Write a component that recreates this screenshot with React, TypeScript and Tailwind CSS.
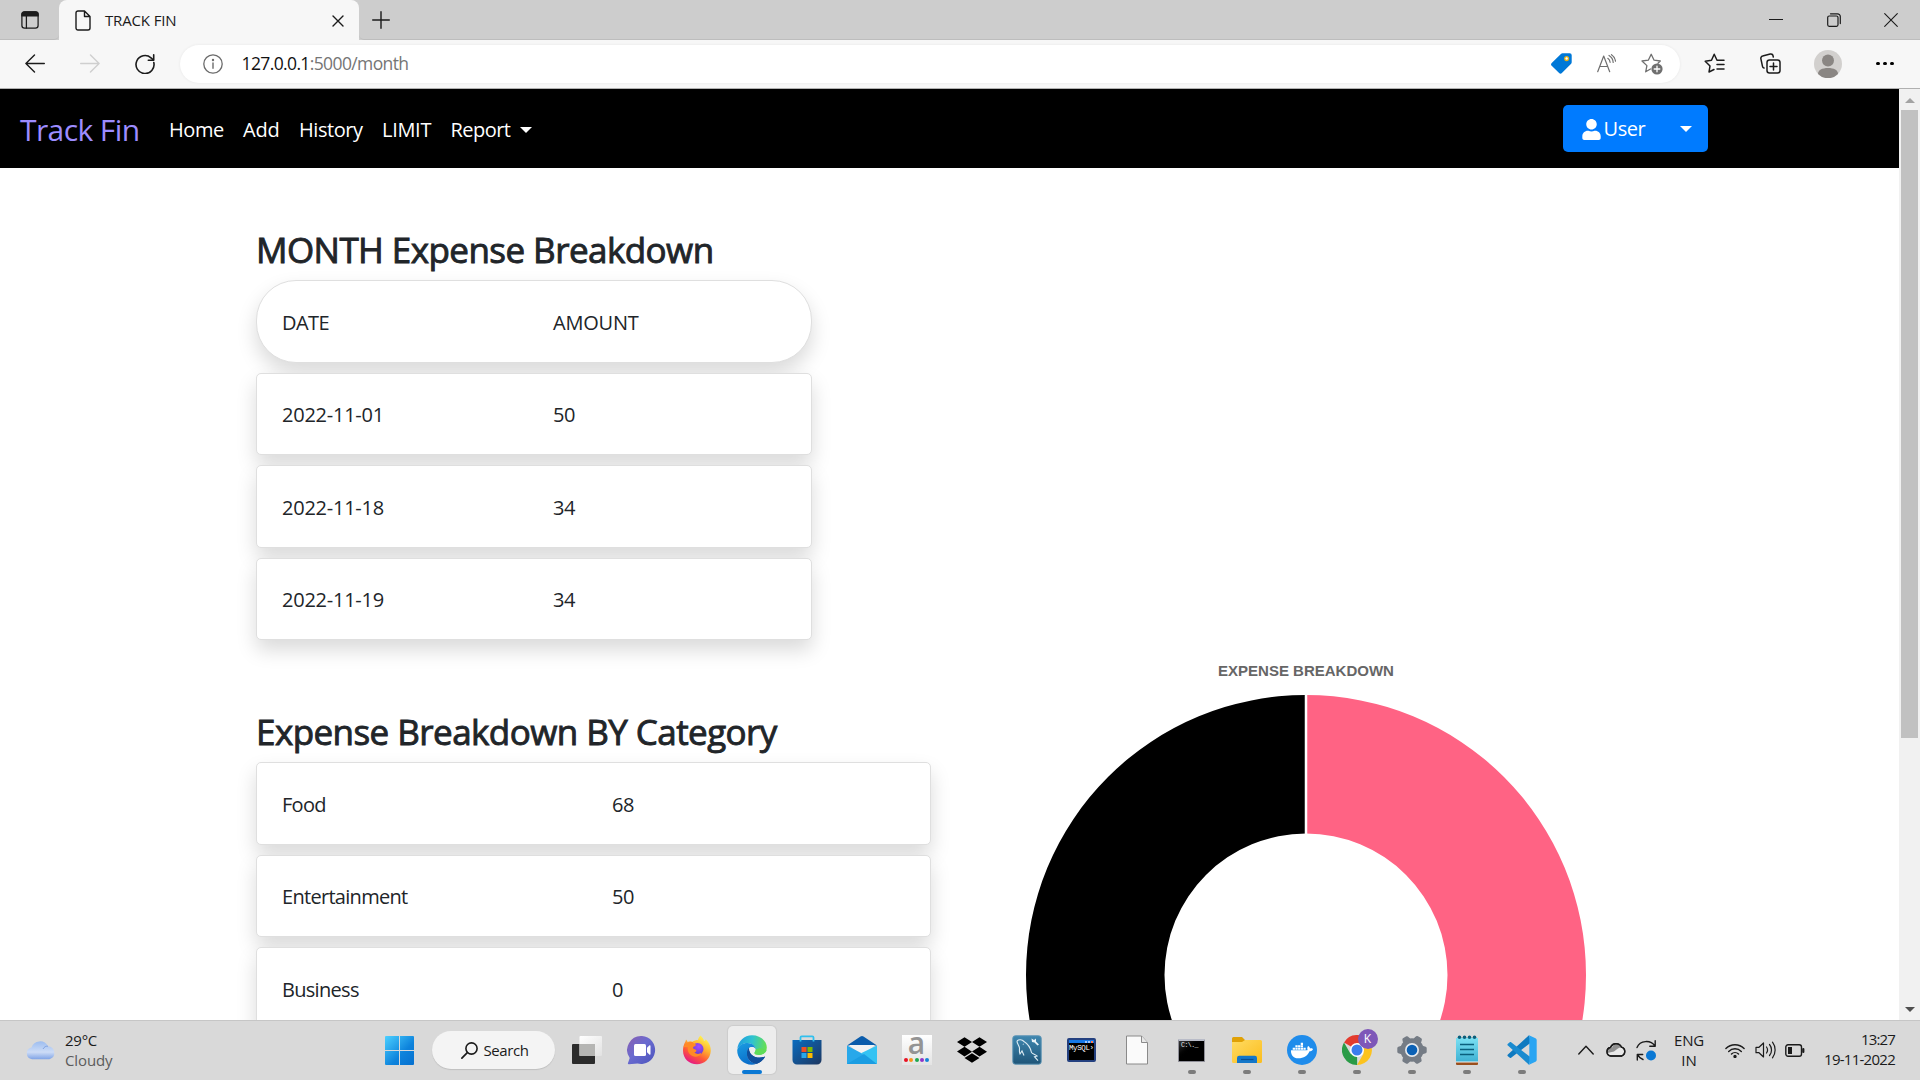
import React from "react";
import { FaUser, FaDropbox, FaDocker } from "react-icons/fa";

type SvgProps = { className?: string; children: React.ReactNode; box?: string };
function Line({ className = "", children, box = "0 0 20 20" }: SvgProps) {
  return (
    <svg viewBox={box} className={"block shrink-0 " + className} fill="none" stroke="currentColor" strokeWidth="1.4" strokeLinecap="round" strokeLinejoin="round">
      {children}
    </svg>
  );
}

function TabStrip() {
  return (
    <div className="flex h-[40px] shrink-0 bg-[#cdcdcd]">
      <div className="flex w-[59px] shrink-0 items-center rounded-br-[5px] border-b border-[#bdbdbd] pl-[21px]">
        <Line className="h-[18px] w-[18px] text-[#1b1b1b]">
          <rect x="1" y="1" width="18" height="18" rx="3" />
          <path d="M1 5V4a3 3 0 0 1 3-3h12a3 3 0 0 1 3 3v1.500H1Z" fill="currentColor" />
          <path d="M6 6v13" />
        </Line>
      </div>
      <div className="flex w-[300px] shrink-0 items-center rounded-t-[8px] bg-[#f7f7f7] pr-[15px] pl-[16px]">
        <Line box="0 0 16 21" className="h-[21px] w-[16px] text-[#1b1b1b]">
          <path d="M3 1h6.500L15 6.500V18a2 2 0 0 1-2 2H3a2 2 0 0 1-2-2V3a2 2 0 0 1 2-2ZM9.500 1v5.500H15" />
        </Line>
        <span className="ml-[14px] text-[15px] leading-none tracking-[-0.15px] text-[#1b1b1b]">TRACK FIN</span>
        <Line box="0 0 12 12" className="mt-px ml-auto h-[12px] w-[12px] text-[#1b1b1b]">
          <path d="M1 1l10 10M11 1L1 11" />
        </Line>
      </div>
      <div className="flex flex-1 items-center rounded-bl-[5px] border-b border-[#bdbdbd] pl-[13px] text-[#1b1b1b]">
        <Line box="0 0 18 18" className="h-[18px] w-[18px]">
          <path d="M9 .7v16.600M.7 9h16.600" />
        </Line>
        <div className="ml-auto flex items-center gap-[43px] pr-[22px]">
          <Line box="0 0 14 14" className="mr-[1px] h-[14px] w-[14px]"><path d="M.5 6.500h13" strokeWidth="1.200" /></Line>
          <Line box="0 0 14 14" className="h-[14px] w-[14px]">
            <rect x=".7" y="3" width="10.300" height="10.300" rx="1.500" strokeWidth="1.200" />
            <path d="M3.500 .8h7a2.800 2.800 0 0 1 2.800 2.800v7" strokeWidth="1.200" />
          </Line>
          <Line box="0 0 14 14" className="h-[14px] w-[14px]"><path d="M.7.700l12.600 12.600M13.300.700L.700 13.300" strokeWidth="1.100" /></Line>
        </div>
      </div>
    </div>
  );
}

function Toolbar() {
  return (
    <div className="flex h-[49px] shrink-0 items-center border-b border-[#b0b0b0] bg-[#f7f7f7] pb-px pl-[25px] text-[#1b1b1b]">
      <Line className="h-[20px] w-[20px]"><path d="M19.300 9.500H.9M9.500 1L.9 9.500 9.500 18" /></Line>
      <Line className="ml-[35px] h-[20px] w-[20px] text-[#cfcfcf]"><path d="M.7 9.500h18.400M10.500 1l8.600 8.500-8.600 8.500" /></Line>
      <Line className="ml-[35px] h-[20px] w-[20px]">
        <path d="M18.800 8.500A9 9 0 1 1 16 3.800l2.300 2" strokeWidth="1.600" />
        <path d="M18.700 .8v5.400h-5.400" strokeWidth="1.600" />
      </Line>
      <div className="ml-[25px] flex h-[38px] w-[1500px] items-center rounded-full bg-white pr-[17px] pl-[23px] shadow-[0_0_3px_rgba(0,0,0,0.07)]">
        <Line className="h-[20px] w-[20px] text-[#6b6b6b]">
          <circle cx="10" cy="10" r="9.200" strokeWidth="1.300" />
          <path d="M10 9v5.300" />
          <circle cx="10" cy="6" r=".5" fill="currentColor" />
        </Line>
        <span className="ml-[18.5px] text-[17.5px] leading-none tracking-[-0.62px] text-[#757575]">
          <span className="text-[#111]">127.0.0.1</span>:5000/month
        </span>
        <svg viewBox="0 0 21 21" className="ml-auto h-[21px] w-[21px]">
          <path d="M11.500.3h7.200a2 2 0 0 1 2 2v6.900a2.500 2.500 0 0 1-.8 1.800l-9 9a2 2 0 0 1-2.800 0L.7 12.800a2 2 0 0 1 0-2.800L9.900 1a2.500 2.500 0 0 1 1.600-.7Z" fill="#0078d7" />
          <circle cx="15.600" cy="5.600" r="1.900" fill="#fff" stroke="#e8b013" strokeWidth="1.300" />
        </svg>
        <Line className="ml-[25px] h-[20px] w-[19px] text-[#6f6f6f]" box="0 0 19 20">
          <path d="M.7 17.700L6.700 2l6 15.700M2.600 12.500h8.200M10.800 4.300c1.500 1 2.200 2.300 2.300 4M12 1.500c2.600 1.500 4 3.700 4.200 7M14.500.700c2.400 1.600 3.700 3.600 4 6.500" strokeWidth="1.200" />
        </Line>
        <Line className="ml-[25px] h-[22px] w-[22px] text-[#6f6f6f]" box="0 0 22 22">
          <path d="M9.500 16l-4.800 2.800 1.200-6.200L1 8l6.300-.8L10.200 1.300l2.900 5.900 6.200.8-2.300 2.200" strokeWidth="1.300" />
          <circle cx="16" cy="16" r="5.600" fill="currentColor" stroke="none" />
          <path d="M16 13.200v5.600M13.200 16h5.600" stroke="#fff" strokeWidth="1.300" />
        </Line>
      </div>
      <Line className="ml-[24px] h-[21px] w-[21px]" box="0 0 21 21">
        <path d="M10 16.500L5 19l1-6L1.200 8.300 7.500 7.300 10.200 1.300 13 7.300M13 7.300h7M13 11.600h7M13 15.900h7" strokeWidth="1.500" />
      </Line>
      <Line className="ml-[35px] h-[21px] w-[21px]" box="0 0 21 21">
        <rect x="7" y="7" width="13" height="13" rx="2.500" strokeWidth="1.500" />
        <path d="M13.500 10v7M10 13.500h7M4 15a2 2 0 0 1-1.500-1.600L.9 5.800A2.300 2.300 0 0 1 2.600 3l7.600-2A2.300 2.300 0 0 1 13 2.700l.3 1.300" strokeWidth="1.500" />
      </Line>
      <svg viewBox="0 0 28 28" className="ml-[33px] h-[28px] w-[28px]">
        <circle cx="14" cy="14" r="14" fill="#d2d0ce" />
        <circle cx="14" cy="10.500" r="6" fill="#8a8683" />
        <path d="M4 24c0-4 4-6 10-6s10 2 10 6a14 14 0 0 1-20 0Z" fill="#8a8683" />
      </svg>
      <div className="ml-[34px] flex gap-[3.5px]">
        <i className="h-[3.5px] w-[3.5px] rounded-full bg-black" />
        <i className="h-[3.5px] w-[3.5px] rounded-full bg-black" />
        <i className="h-[3.5px] w-[3.5px] rounded-full bg-black" />
      </div>
    </div>
  );
}

function Caret({ className = "" }: { className?: string }) {
  return <i className={"block h-0 w-0 border-x-[6px] border-t-[6px] border-x-transparent border-t-white " + className} />;
}

function Navbar() {
  return (
    <nav className="flex h-[79px] shrink-0 items-center bg-black pl-[20px] text-[20px] leading-none text-white">
      <div className="flex items-center pt-[2px]">
        <span className="w-[149px] text-[30px] tracking-[-0.6px] text-[#9d8cff]">Track Fin</span>
        <span className="w-[74px] tracking-[-0.4px]">Home</span>
        <span className="w-[56px] tracking-[-0.2px]">Add</span>
        <span className="w-[83px] tracking-[-0.45px]">History</span>
        <span className="w-[68.5px] tracking-[-0.3px]">LIMIT</span>
        <span className="w-[69.5px] tracking-[-0.53px]">Report</span>
        <Caret />
      </div>
      <div className="mr-[191px] ml-auto flex h-[47px] w-[145px] items-center rounded-[5px] bg-[#007bff] pt-px pl-[19px]">
        <FaUser className="h-[21px] w-[19px]" />
        <span className="ml-[2.5px] tracking-[-0.45px]">User</span>
        <Caret className="mr-[16px] ml-auto" />
      </div>
    </nav>
  );
}

function Card({ a, b, pill, wide }: { a: string; b: string; pill?: boolean; wide?: boolean }) {
  return (
    <div
      className={
        "flex h-[82.25px] shrink-0 items-center border border-[#dfdfdf] bg-white pt-[3px] pl-[25px] text-[20px] leading-[30px] shadow-[0_10px_20px_rgba(0,0,0,0.15)] " +
        (pill ? "rounded-[40px]" : "rounded-[5px]")
      }
    >
      <span className={wide ? "w-[330px] tracking-[-0.7px]" : pill ? "w-[271px] tracking-[-0.57px]" : "w-[271px] tracking-[-0.24px]"}>{a}</span>
      <span className={pill ? "tracking-[-0.2px]" : "tracking-[-0.5px]"}>{b}</span>
    </div>
  );
}

function Donut() {
  return (
    <svg viewBox="0 0 560 560" className="block h-[560px] w-[560px]">
      <path d="M280 0a280 280 0 0 1 0 560V421.500a141.500 141.500 0 0 0 0-283Z" fill="#ff6384" />
      <path d="M280 0a280 280 0 0 0 0 560V421.500a141.500 141.500 0 0 1 0-283Z" fill="#000" />
      <path d="M280 0v560" stroke="#fff" strokeWidth="2.500" />
    </svg>
  );
}

function Scrollbar() {
  return (
    <div className="flex w-[21px] shrink-0 flex-col items-center bg-[#f1f1f1] pt-[9px]">
      <i className="mb-[7px] border-x-[5px] border-b-[5px] border-x-transparent border-b-[#a3a3a3]" />
      <div className="h-[628px] w-[17px] bg-[#c1c1c1]" />
      <i className="mt-auto mb-[8px] border-x-[5px] border-t-[5px] border-x-transparent border-t-[#505050]" />
    </div>
  );
}

const heading = "h-[42px] shrink-0 text-[35px] leading-[44px] tracking-[-0.56px] whitespace-pre [-webkit-text-stroke:0.9px_#212529]";

function Page() {
  return (
    <div className="flex h-[931px] shrink-0 overflow-hidden">
      <div className="flex h-[931px] min-w-0 flex-1 flex-col overflow-hidden bg-white">
        <Navbar />
        <main className="pt-[60px] pl-[256px] text-[#212529]">
          <section className="flex h-[422px] w-[556px] flex-col gap-[10.25px]">
            <h3 className={heading}>MONTH Expense Breakdown</h3>
            <Card a="DATE" b="AMOUNT" pill />
            <Card a="2022-11-01" b="50" />
            <Card a="2022-11-18" b="34" />
            <Card a="2022-11-19" b="34" />
          </section>
          <div className="flex items-start">
            <section className="flex h-[400px] w-[675px] shrink-0 flex-col gap-[10.25px] pt-[60px]">
              <h3 className={heading}>Expense Breakdown BY Category</h3>
              <Card a="Food" b="68" wide />
              <Card a="Entertainment" b="50" wide />
              <Card a="Business" b="0" wide />
            </section>
            <section className="ml-[95px] flex flex-col items-center pt-[12px]">
              <h4 className="mb-[15px] h-[18px] font-['Liberation_Sans',Arial,sans-serif] text-[15px] leading-[18px] font-bold text-[#666]">EXPENSE BREAKDOWN</h4>
              <Donut />
            </section>
          </div>
        </main>
      </div>
      <Scrollbar />
    </div>
  );
}

const S = "block h-[30px] w-[30px]";

function TaskView() {
  return (
    <svg viewBox="0 0 30 30" className={S}>
      <defs><linearGradient id="tv" x1="0" y1="0" x2="1" y2="1"><stop stopColor="#fff" /><stop offset="1" stopColor="#e2e2e2" /></linearGradient></defs>
      <rect x="0" y="9" width="23" height="20" rx="1" fill="#2b2b2b" />
      <rect x="7.500" y="1" width="22.500" height="20" rx="1" fill="url(#tv)" />
      <rect x="7.500" y="9" width="15.500" height="12" fill="#b5b5b3" />
    </svg>
  );
}
function Chat() {
  return (
    <svg viewBox="0 0 30 30" className={S}>
      <defs><linearGradient id="ch" x1="0" y1="0" x2="1" y2="1"><stop stopColor="#8a5fb0" /><stop offset=".45" stopColor="#6a6bd0" /><stop offset="1" stopColor="#4b53bc" /></linearGradient></defs>
      <path d="M15 1a14 14 0 1 1-4.500 27.500L2 29.300c-1 .1-1.400-.5-1-1.300l1.700-5A14 14 0 0 1 15 1Z" fill="url(#ch)" />
      <rect x="7" y="9" width="12" height="12" rx="1.500" fill="#fff" />
      <path d="M20 12.800l2.300-2.300c.6-.6 1.200-.4 1.200.4v8.200c0 .8-.6 1-1.200.4L20 17.200Z" fill="#fff" />
    </svg>
  );
}
function Firefox() {
  return (
    <svg viewBox="0 0 30 30" className={S}>
      <defs>
        <linearGradient id="ff" x1=".8" y1=".1" x2=".3" y2="1"><stop stopColor="#fff14f" /><stop offset=".35" stopColor="#ffb02e" /><stop offset=".65" stopColor="#ff5a36" /><stop offset="1" stopColor="#e3158a" /></linearGradient>
        <radialGradient id="fp" cx=".6" cy=".3" r=".8"><stop stopColor="#a44bff" /><stop offset="1" stopColor="#5b3ec4" /></radialGradient>
      </defs>
      <path d="M18.500.500c2 2 3 3.500 3.500 5.500 1-.2 1.500-1 1.700-1.700C27.500 8 29 12 28.800 16 28.300 24 22 29.300 15 29.300 7 29.300 1 23.500 1 15.500 1 11.500 2.300 8.200 3.600 6.200L4 4.500c.8 1 1.300 1.700 1.700 2.600C7.500 6 9 6 10.500 6.800 12 5.500 14 5 16 5c.4-1.800 1.200-3.300 2.500-4.500Z" fill="url(#ff)" />
      <circle cx="15.500" cy="14" r="6" fill="url(#fp)" />
      <path d="M1.500 12C3 8 7 6.500 10.500 7c.8 1.500 2.500 1.500 3.500 2.800-.2 1.500-2.500 1.700-3 2.700.2 1.800 1.500 1.500 2.500 2 1.500 1 1 2.500-1 2.800 1.500 2 4.500 2.200 7 .5-1.500 3.500-4.500 4.500-7.500 3.700-5-1.300-7-5.500-6-9.500Z" fill="#ff8a26" />
    </svg>
  );
}
function Edge() {
  return (
    <svg viewBox="0 0 30 30" className={S}>
      <defs>
        <linearGradient id="e1" x1="0" y1=".3" x2="1" y2=".4"><stop stopColor="#1e9be0" /><stop offset=".5" stopColor="#2fc3d0" /><stop offset="1" stopColor="#66e04f" /></linearGradient>
        <linearGradient id="e2" x1="0" y1="0" x2=".4" y2="1"><stop stopColor="#1b9de2" /><stop offset="1" stopColor="#0a6fcb" /></linearGradient>
      </defs>
      <path d="M.3 14C1 6 7.300.200 15 .200 23.500.200 29.800 6 29.800 12.500c0 4.500-3.200 7.500-7.300 7.500-3.500 0-5-1-5-2 0-.8 1.100-1.300 1.100-3.500C18.600 11 15 8 10.500 8 6 8 2.200 10.500.300 14Z" fill="url(#e1)" />
      <path d="M.2 15C1.500 10.500 5.500 8 10.500 8c4.700 0 8.100 3 8.100 6.300-.7-1.500-2-2.300-3.600-2.300-3 0-5 3-5 6.500 0 5 3.500 9.500 9.500 10.300-1.500.7-3 1-4.700 1C6.500 29.800 0 23 .2 15Z" fill="url(#e2)" />
      <path d="M12 13c-1.200 1-2 3-2 5.500 0 5.500 4.500 10 9.800 10.200 4-1 6.700-4 8.200-6.700.2-.5-.2-.9-.7-.6-1.300.7-3 1.100-4.800 1.100-6 0-10.500-4-10.500-9.500Z" fill="#104f9c" />
      <path d="M12 13c3-2 6-.500 6.500 1.800 0 1.700-1.200 2.200-1.200 3.200 0 1 1.700 2 5 2 2 0 4-.6 5.500-2l.4 3.300c-1.500.9-3.600 1.300-5.700 1.300-6 0-10.500-4-10.500-9.600Z" fill="#ededed" />
      <path d="M17.300 18c0 1 1.700 2 5 2 3.500 0 6.500-2 7.300-5l-6.500-2-4.500 1.500c0 2.200-1.300 2.700-1.300 3.500Z" fill="#5fdc58" />
      <path d="M12 13c-.3 5.500 4 9.600 10.500 9.600 2 0 4-.4 5.500-1.200-1.500 3-4.500 6.200-8.200 7.300C14 28.500 10 24 10 18.500c0-2.500.8-4.500 2-5.500Z" fill="#104f9c" />
    </svg>
  );
}
function Store() {
  return (
    <svg viewBox="0 0 30 30" className={S}>
      <defs><linearGradient id="st" x1="0" y1="0" x2="1" y2="1"><stop stopColor="#0a6cc0" /><stop offset="1" stopColor="#1d3760" /></linearGradient></defs>
      <path d="M.5 5h29v20a4.500 4.500 0 0 1-4.500 4.500H5A4.500 4.500 0 0 1 .5 25Z" fill="url(#st)" />
      <path d="M8.500 6.500V2.500A1.200 1.200 0 0 1 9.700 1.300h10.600a1.200 1.200 0 0 1 1.200 1.200V6.500" fill="none" stroke="#30c0ee" strokeWidth="1.800" />
      <path d="M9.500 12h5v5h-5z" fill="#f25022" /><path d="M15.500 12h5v5h-5z" fill="#7fba00" />
      <path d="M9.500 18h5v5h-5z" fill="#28a8ea" /><path d="M15.500 18h5v5h-5z" fill="#ffb900" />
    </svg>
  );
}
function Mail() {
  return (
    <svg viewBox="0 0 30 30" className={S}>
      <path d="M0 10.500L13.500 1.600a2.700 2.700 0 0 1 3 0L30 10.500Z" fill="#0b5cab" />
      <path d="M2 10h26L15 21Z" fill="#f3f3f3" />
      <path d="M0 10.500L15 18.500 30 29H0Z" fill="#28a8ea" />
      <path d="M30 10.500V29L14 18.300Z" fill="#35c3f3" />
      <path d="M0 29L17 19l13 10Z" fill="#1b9de2" />
    </svg>
  );
}
function Alexa() {
  return (
    <div className="flex h-[30px] w-[30px] flex-col items-center bg-gradient-to-b from-white to-[#e4e4e4]">
      <span className="h-[21px] text-[30px] leading-[15px] font-semibold text-[#949494]">a</span>
      <div className="flex gap-[1.4px] pt-[1.5px]">
        <i className="h-[4px] w-[4px] rounded-full bg-[#e81123]" />
        <i className="h-[4px] w-[4px] rounded-full bg-[#f7941d]" />
        <i className="h-[4px] w-[4px] rounded-full bg-[#1fa84f]" />
        <i className="h-[4px] w-[4px] rounded-full bg-[#8e35c9]" />
        <i className="h-[4px] w-[4px] rounded-full bg-[#1383d8]" />
      </div>
    </div>
  );
}
function Workbench() {
  return (
    <svg viewBox="0 0 30 30" className={S}>
      <defs><linearGradient id="wb" x1="0" y1="0" x2="0" y2="1"><stop stopColor="#3f87b0" /><stop offset="1" stopColor="#1f5578" /></linearGradient></defs>
      <rect x=".8" y=".8" width="28.400" height="28.400" rx="2.500" fill="url(#wb)" stroke="#5d95b5" />
      <path d="M5 6c2-2 5-1.500 7 .5 4 2.500 6.500 6 7.500 11 1.200 1.500 3.500 1.800 5.500 3.500l-2.500.7 3.500 4M5 6c0 3 2 4 2.500 7 0 2-.5 4 .5 6l2-3 2 4.500M11 9l.5.500" fill="none" stroke="#dcebf3" strokeWidth="1.100" />
      <path d="M19.500 3.500l2.500 1.500 2-1.500v3l3 3-1.500 1-3-3-2.500-.5Z" fill="#e8f2f8" />
    </svg>
  );
}
function MysqlShell() {
  return (
    <div className="flex h-[24px] w-[29px] flex-col rounded-[2px] border-2 border-[#24407f] bg-black">
      <div className="flex h-[3px] shrink-0 items-center justify-end gap-px bg-[#1579e8] pr-px">
        <i className="h-[2px] w-[2px] bg-[#9cc8ff]" /><i className="h-[2px] w-[2px] bg-[#9cc8ff]" /><i className="h-[2px] w-[2px] bg-[#ff7a50]" />
      </div>
      <span className="overflow-hidden font-['Liberation_Mono',monospace] text-[7.5px] leading-[10px] tracking-[-0.4px] whitespace-pre text-white">MySQL›</span>
    </div>
  );
}
function BlankFile() {
  return (
    <svg viewBox="0 0 30 30" className={S}>
      <path d="M4.500 1h15l6 6.500V29h-21Z" fill="#fafafa" stroke="#8a8a8a" />
      <path d="M19.500 1v6.500h6" fill="#e8e8e8" stroke="#8a8a8a" />
    </svg>
  );
}
function Cmd() {
  return (
    <div className="flex h-[23px] w-[27px] flex-col rounded-[1px] border border-t-2 border-[#8f8f98] border-t-[#b9bcc8] bg-gradient-to-br from-[#3a3a3a] via-black to-black">
      <span className="pl-[2px] font-['Liberation_Mono',monospace] text-[6.5px] leading-[9px] tracking-[-0.5px] whitespace-pre text-[#e6e6e6]">C:\._</span>
    </div>
  );
}
function Folder() {
  return (
    <svg viewBox="0 0 30 30" className={S}>
      <defs><linearGradient id="fo" x1="0" y1="0" x2="1" y2="1"><stop stopColor="#ffdb62" /><stop offset="1" stopColor="#fbbd1d" /></linearGradient></defs>
      <path d="M0 3.500A1.500 1.500 0 0 1 1.500 2H10l3 3v4H0Z" fill="#e0a106" />
      <path d="M0 7h10l3-2h15.500A1.500 1.500 0 0 1 30 6.500v20a1.500 1.500 0 0 1-1.500 1.500h-27A1.500 1.500 0 0 1 0 26.500Z" fill="url(#fo)" />
      <path d="M5 28v-5a2.200 2.200 0 0 1 2.200-2.200h15.600A2.200 2.200 0 0 1 25 23v5Z" fill="#1477c9" />
      <path d="M9 24.500h12.500" stroke="#0b4f93" strokeWidth="1.200" />
    </svg>
  );
}
function Docker() {
  return (
    <div className="flex h-[30px] w-[30px] items-center justify-center rounded-full bg-[#1f8ceb] text-white">
      <FaDocker className="h-[23px] w-[22px]" />
    </div>
  );
}
function Chrome() {
  return (
    <div className="relative h-[30px] w-[30px]">
      <svg viewBox="0 0 30 30" className={S}>
        <path d="M15 15L2 7.500a15 15 0 0 1 26 0Z" fill="#e33b2e" />
        <path d="M15 15L15.200 30A15 15 0 0 1 2 7.500l6.500 11.200Z" fill="#2a9b47" />
        <path d="M15 8h13.200A15 15 0 0 1 15 30l6.500-11.200Z" fill="#fcc31e" />
        <circle cx="15" cy="15" r="7" fill="#fff" />
        <circle cx="15" cy="15" r="5.500" fill="#3b7ded" />
      </svg>
      <span className="absolute -top-[6px] left-[16px] flex h-[20px] w-[20px] items-center justify-center rounded-full bg-[#7e57b8] text-[12px] leading-none text-white">K</span>
    </div>
  );
}
const teeth = [30, 90, 150, 210, 270, 330];
function Gear() {
  return (
    <svg viewBox="0 0 30 30" className={S}>
      <g fill="#757c85">
        <circle cx="15" cy="15" r="11.700" />
        {[0, ...teeth.map((t) => t + 30)].map((t, i) => (
          <path key={i} d="M10.800 4.500l1-3.200a1.500 1.500 0 0 1 1.200-1h4a1.500 1.500 0 0 1 1.200 1l1 3.200Z" transform={`rotate(${t + 30} 15 15)`} />
        ))}
      </g>
      <circle cx="15" cy="15" r="7" fill="#e6eaee" />
      <circle cx="15" cy="15" r="5.300" fill="#0b61b5" />
    </svg>
  );
}
function Notepad() {
  return (
    <svg viewBox="0 0 30 30" className={S}>
      <defs><linearGradient id="np" x1="0" y1="0" x2="0" y2="1"><stop stopColor="#7be0f3" /><stop offset="1" stopColor="#3fb2d4" /></linearGradient></defs>
      <rect x="4" y="26" width="22" height="4" rx="1" fill="#9a4f1d" />
      <rect x="4" y="25.500" width="22" height="2" fill="#f3f3f3" />
      <path d="M4 3h22v23.500H4Z" fill="url(#np)" />
      <path d="M8 9.500h14M8 14.500h14M8 19.500h14" stroke="#0a5f7d" strokeWidth="1.700" />
      <g fill="#0b5f7c"><circle cx="7.500" cy="2.300" r="1.800" /><circle cx="12.500" cy="2.300" r="1.800" /><circle cx="17.500" cy="2.300" r="1.800" /><circle cx="22.500" cy="2.300" r="1.800" /></g>
    </svg>
  );
}
function VsCode() {
  return (
    <svg viewBox="0 0 30 30" className={S}>
      <path d="M22 .3L.9 19.400a1.200 1.200 0 0 0 0 1.800l1.600 1.400c.5.400 1.100.4 1.600.1L24 7.500Z" fill="#0f7ac0" />
      <path d="M22 29.700L.9 10.600a1.200 1.200 0 0 1 0-1.800l1.600-1.400c.5-.4 1.100-.4 1.600-.1L24 22.500Z" fill="#1a8bd0" />
      <path d="M22 .2l6.500 3a2 2 0 0 1 1.200 1.800v20a2 2 0 0 1-1.200 1.800l-6.500 3a1.500 1.500 0 0 1-1.300-.3c.8.6 1.600 0 1.600-.9V1.400c0-.9-.8-1.500-1.600-.9A1.500 1.500 0 0 1 22 .2Z" fill="#2aa5f2" />
    </svg>
  );
}

const apps: { icon: React.ReactNode; state?: "active" | "open" }[] = [
  { icon: <TaskView /> },
  { icon: <Chat /> },
  { icon: <Firefox /> },
  { icon: <Edge />, state: "active" },
  { icon: <Store /> },
  { icon: <Mail /> },
  { icon: <Alexa /> },
  { icon: <FaDropbox className="h-[34px] w-[30px] text-black" /> },
  { icon: <Workbench /> },
  { icon: <MysqlShell /> },
  { icon: <BlankFile /> },
  { icon: <Cmd />, state: "open" },
  { icon: <Folder />, state: "open" },
  { icon: <Docker />, state: "open" },
  { icon: <Chrome />, state: "open" },
  { icon: <Gear />, state: "open" },
  { icon: <Notepad />, state: "open" },
  { icon: <VsCode />, state: "open" },
];

function Taskbar() {
  return (
    <footer className="flex h-[60px] shrink-0 items-center border-t border-[#c6c6c6] bg-[#d9d9d9] pb-px text-[15px] leading-[20px] text-[#1b1b1b]">
      <div className="flex w-[385px] shrink-0 items-center pl-[26px]">
        <svg viewBox="0 0 30 20" className="h-[20px] w-[30px]">
          <defs><linearGradient id="cl" x1="0" y1="0" x2="0" y2="1"><stop stopColor="#9dbdf0" /><stop offset=".6" stopColor="#cddcf6" /><stop offset="1" stopColor="#7fa3e6" /></linearGradient></defs>
          <path d="M6 19.300A6 6 0 0 1 5.500 7.500 9 9 0 0 1 22 6.200a6.700 6.700 0 0 1 1.500 13.100Z" fill="url(#cl)" />
          <path d="M17 9c1.500-2.500 3-3 5-2.800" fill="none" stroke="#7297dc" strokeWidth=".8" />
        </svg>
        <div className="ml-[9px] flex flex-col pb-px">
          <span className="tracking-[-0.26px]">29°C</span>
          <span className="tracking-[-0.11px] text-[#5c5c5c]">Cloudy</span>
        </div>
      </div>
      <svg viewBox="0 0 29 29" className="h-[29px] w-[29px] shrink-0">
        <defs><linearGradient id="wi" x1="0" y1="0" x2="1" y2="1"><stop stopColor="#4cd0ff" /><stop offset=".6" stopColor="#0d83dc" /><stop offset="1" stopColor="#0670cf" /></linearGradient></defs>
        <path d="M1 0h13v14H0V1a1 1 0 0 1 1-1ZM15 0h13a1 1 0 0 1 1 1v13H15ZM0 15h14v14H1a1 1 0 0 1-1-1ZM15 15h14v13a1 1 0 0 1-1 1H15Z" fill="url(#wi)" />
      </svg>
      <div className="ml-[18px] flex h-[38px] w-[123px] shrink-0 items-center rounded-full bg-[#f4f4f4] pl-[29px] shadow-[0_1px_1px_rgba(0,0,0,0.12)]">
        <Line box="0 0 17 17" className="h-[17px] w-[17px]"><circle cx="10.500" cy="6.500" r="5.600" strokeWidth="1.600" /><path d="M6.300 10.700L.9 16.100" strokeWidth="1.700" /></Line>
        <span className="ml-[5.5px] tracking-[-0.42px]">Search</span>
      </div>
      <div className="ml-[4px] flex shrink-0">
        {apps.map((a, i) => (
          <div key={i} className="flex w-[55px] justify-center">
            <div className={"flex h-[48px] w-[48px] flex-col items-center rounded-[5px] pt-[9px] " + (a.state === "active" ? "bg-[#ededed] shadow-[0_0_1px_1px_rgba(0,0,0,0.06)]" : "")}>
              <div className="flex h-[30px] w-[30px] items-center justify-center">{a.icon}</div>
              {a.state === "active" && <i className="mt-[5px] h-[4px] w-[20px] rounded-full bg-[#0a78d4]" />}
              {a.state === "open" && <i className="mt-[5px] h-[4px] w-[8px] rounded-full bg-[#7c7c7c]" />}
            </div>
          </div>
        ))}
      </div>
      <div className="ml-auto flex items-center pr-[25px]">
        <Line box="0 0 16 10" className="h-[10px] w-[16px]"><path d="M.8 9L8 1.200 15.200 9" /></Line>
        <Line box="0 0 20 14" className="ml-[12px] h-[14px] w-[20px]">
          <path d="M5 13a4.300 4.300 0 0 1-.5-8.500 6 6 0 0 1 11-.3 4.600 4.600 0 0 1 0 8.800Z" fill="#e8e8e8" />
          <path d="M1.500 10C2.500 5.500 4 4.800 6 4.800c2-4.500 8-4.500 9.500-.6C12 4.500 11 6.500 8 8.500Z" fill="#8f8f8f" stroke="none" />
          <path d="M5 13a4.300 4.300 0 0 1-.5-8.500 6 6 0 0 1 11-.3 4.600 4.600 0 0 1 0 8.800Z" />
        </Line>
        <Line box="0 0 21 21" className="ml-[10px] h-[21px] w-[21px]">
          <path d="M1 7.500C4 .200 14.500-.500 19 6M19.200 .8V6.200H13.800M7 19.500C4.500 18.700 2.800 17 1.500 14.600M1.300 20v-5.500h5.400" />
          <circle cx="15" cy="15.500" r="5" fill="#0a78d4" stroke="none" />
        </Line>
        <div className="ml-[17px] flex w-[30px] flex-col items-center pb-px">
          <span className="tracking-[-0.18px]">ENG</span>
          <span>IN</span>
        </div>
        <Line box="0 0 20 15" className="ml-[21px] h-[15px] w-[20px]">
          <path d="M.9 5.500a12.800 12.800 0 0 1 18.200 0M3.700 8.400a8.900 8.900 0 0 1 12.600 0M6.500 11.100a5 5 0 0 1 7 0" />
          <circle cx="10" cy="13.400" r="1" fill="currentColor" />
        </Line>
        <Line box="0 0 21 18" className="ml-[10px] h-[18px] w-[21px]">
          <path d="M1 6.300h3L8.500 2v14L4 11.700H1ZM11.500 6c1.300 1.800 1.300 4.200 0 6M14.500 3.500c2.700 3.200 2.700 7.800 0 11M17.500 1.200c3.500 4.600 3.500 11 0 15.600" strokeWidth="1.200" />
        </Line>
        <Line box="0 0 20 13" className="ml-[9px] h-[13px] w-[20px]">
          <rect x=".8" y=".8" width="15.700" height="11.400" rx="2.200" />
          <rect x="3" y="3" width="4" height="7" fill="currentColor" stroke="none" />
          <path d="M18.300 5v3" strokeWidth="2.200" />
        </Line>
        <div className="ml-[20px] flex w-[70px] flex-col items-end pb-[3px]">
          <span className="tracking-[-0.85px]">13:27</span>
          <span className="tracking-[-0.73px] whitespace-pre">19-11-2022</span>
        </div>
      </div>
    </footer>
  );
}

export default function App() {
  return (
    <div className="flex h-[1080px] w-[1920px] flex-col overflow-hidden bg-white font-['Open_Sans','Noto_Sans',sans-serif]">
      <TabStrip />
      <Toolbar />
      <Page />
      <Taskbar />
    </div>
  );
}
